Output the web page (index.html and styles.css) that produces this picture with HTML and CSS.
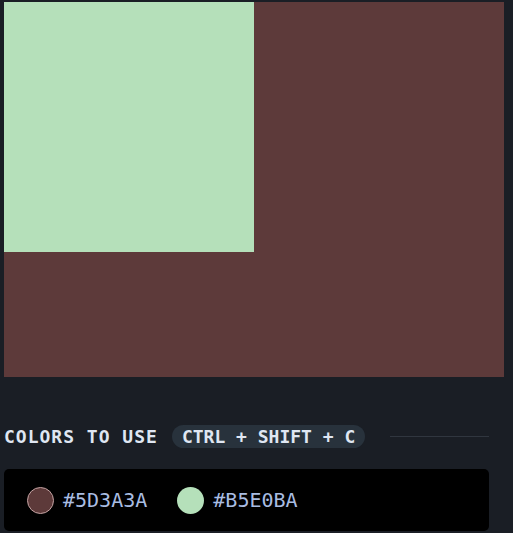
FILE: index.html
```html
<!DOCTYPE html>
<html>
<head>
<meta charset="utf-8">
<link rel="stylesheet" href="styles.css">
</head>
<body>
<div class="canvas">
  <div class="square"></div>
</div>
<div class="panel">
  <div class="heading">
    <span class="title">COLORS TO USE</span>
    <span class="pill">CTRL + SHIFT + C</span>
    <span class="rule"></span>
  </div>
  <div class="swatches">
    <div class="swatch"><span class="dot dot-brown"></span><span class="hex">#5D3A3A</span></div>
    <div class="swatch"><span class="dot dot-green"></span><span class="hex">#B5E0BA</span></div>
  </div>
</div>
</body>
</html>
```
FILE: styles.css
```css
html, body {
  margin: 0;
  background: #1a1e25;
}
body {
  padding: 2px 0 0 4px;
  font-family: "DejaVu Sans Mono", "Liberation Mono", monospace;
}
.canvas {
  width: 500px;
  height: 375px;
  background: #5d3a3a;
}
.square {
  width: 250px;
  height: 250px;
  background: #b5e0ba;
}
.panel {
  width: 485px;
}
.heading {
  margin-top: 48px;
  display: flex;
  align-items: center;
  height: 23px;
}
.title {
  font-size: 18px;
  font-weight: bold;
  letter-spacing: 1px;
  color: #dfe6f2;
  margin-right: 14px;
}
.pill {
  background: #28323c;
  color: #dfe6f2;
  font-size: 18px;
  font-weight: bold;
  height: 23px;
  line-height: 23px;
  padding: 0 10px;
  border-radius: 12px;
}
.rule {
  flex: 1;
  margin-left: 25px;
  height: 1px;
  background: #30363f;
}
.swatches {
  margin-top: 21px;
  background: #000;
  border-radius: 5px;
  height: 62px;
  display: flex;
  align-items: center;
  padding-left: 23px;
  gap: 30px;
}
.swatch {
  display: flex;
  align-items: center;
  gap: 9px;
}
.dot {
  width: 27px;
  height: 27px;
  border-radius: 50%;
  box-sizing: border-box;
}
.dot-brown {
  background: #5d3a3a;
  border: 1px solid #c4a3a3;
}
.dot-green {
  background: #b5e0ba;
}
.hex {
  font-size: 20px;
  color: #a9bde2;
}
```
